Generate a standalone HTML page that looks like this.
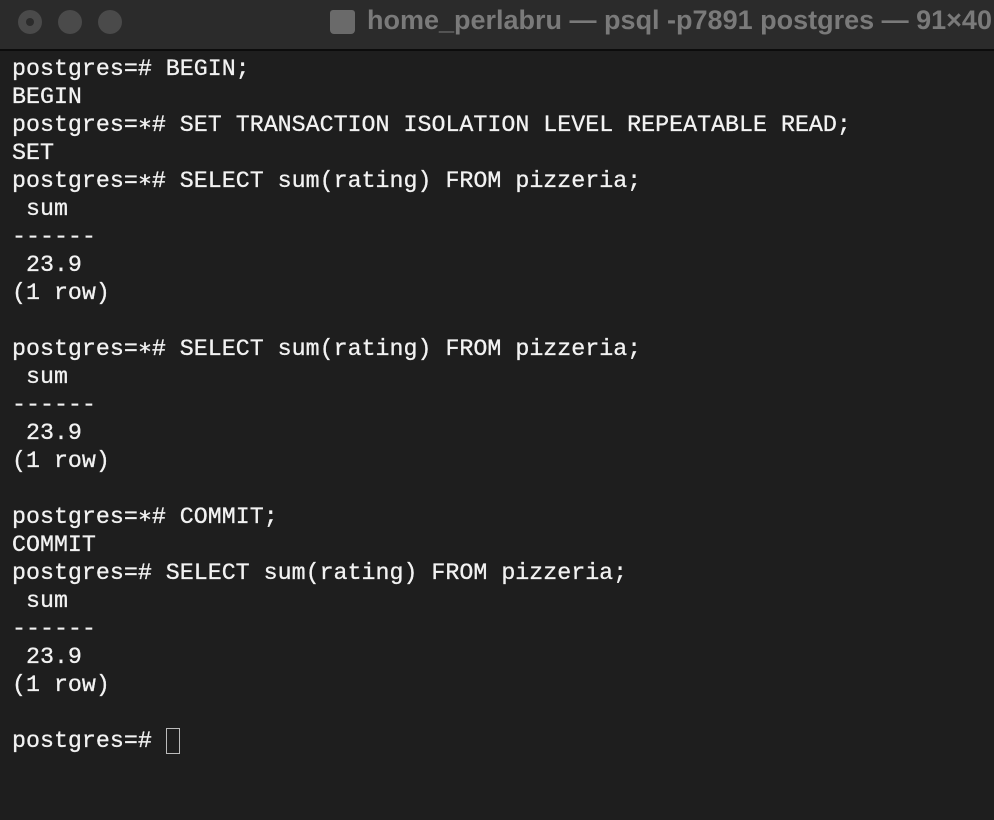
<!DOCTYPE html>
<html><head><style>
html,body{margin:0;padding:0;width:994px;height:820px;overflow:hidden;background:#1e1e1e}
.bar{position:absolute;left:0;top:0;width:994px;height:49px;background:#2b2b2b;border-bottom:2px solid #0c0c0c}
.dot{position:absolute;top:10px;width:24px;height:24px;border-radius:50%;background:#4a4a4a}
.title{position:absolute;left:367px;top:5px;font:bold 27px "Liberation Sans",sans-serif;color:#7a7a7a;white-space:nowrap}
.icon{position:absolute;left:330px;top:10px;width:25px;height:24px;background:#6a6a6a;border-radius:3px 3px 4px 4px}
pre{position:absolute;left:12px;top:55px;margin:0;font:23.3px/28px "Liberation Mono","DejaVu Sans Mono",monospace;color:#f2f2f2;-webkit-text-stroke:0.3px #f2f2f2}
.cur{position:absolute;left:166px;top:728px;width:12px;height:24px;border:1.5px solid #bbb}
</style></head><body>
<div class="bar">
<div class="dot" style="left:18px"></div><div style="position:absolute;left:26px;top:18px;width:8px;height:8px;border-radius:50%;background:#2b2b2b"></div>
<div class="dot" style="left:58px"></div>
<div class="dot" style="left:98px"></div>
<div class="icon"></div>
<div class="title">home_perlabru — psql -p7891 postgres — 91×40</div>
</div>
<pre>postgres=# BEGIN;
BEGIN
postgres=∗# SET TRANSACTION ISOLATION LEVEL REPEATABLE READ;
SET
postgres=∗# SELECT sum(rating) FROM pizzeria;
 sum
------
 23.9
(1 row)

postgres=∗# SELECT sum(rating) FROM pizzeria;
 sum
------
 23.9
(1 row)

postgres=∗# COMMIT;
COMMIT
postgres=# SELECT sum(rating) FROM pizzeria;
 sum
------
 23.9
(1 row)

postgres=# </pre>
<div class="cur"></div>
</body></html>
